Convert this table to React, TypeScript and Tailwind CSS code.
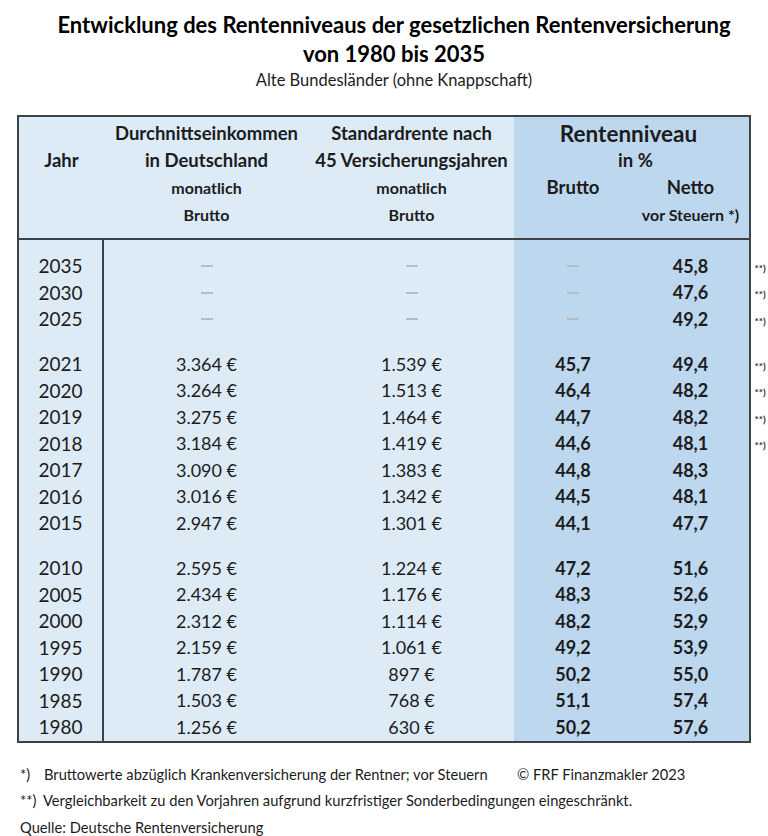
import React from "react";

type Row = {
  y: string;
  e: string;
  s: string;
  b: string;
  n: string;
  m: boolean;
};

const groups: Row[][] = [
  [
    { y: "2035", e: "", s: "", b: "", n: "45,8", m: true },
    { y: "2030", e: "", s: "", b: "", n: "47,6", m: true },
    { y: "2025", e: "", s: "", b: "", n: "49,2", m: true },
  ],
  [
    { y: "2021", e: "3.364 €", s: "1.539 €", b: "45,7", n: "49,4", m: true },
    { y: "2020", e: "3.264 €", s: "1.513 €", b: "46,4", n: "48,2", m: true },
    { y: "2019", e: "3.275 €", s: "1.464 €", b: "44,7", n: "48,2", m: true },
    { y: "2018", e: "3.184 €", s: "1.419 €", b: "44,6", n: "48,1", m: true },
    { y: "2017", e: "3.090 €", s: "1.383 €", b: "44,8", n: "48,3", m: false },
    { y: "2016", e: "3.016 €", s: "1.342 €", b: "44,5", n: "48,1", m: false },
    { y: "2015", e: "2.947 €", s: "1.301 €", b: "44,1", n: "47,7", m: false },
  ],
  [
    { y: "2010", e: "2.595 €", s: "1.224 €", b: "47,2", n: "51,6", m: false },
    { y: "2005", e: "2.434 €", s: "1.176 €", b: "48,3", n: "52,6", m: false },
    { y: "2000", e: "2.312 €", s: "1.114 €", b: "48,2", n: "52,9", m: false },
    { y: "1995", e: "2.159 €", s: "1.061 €", b: "49,2", n: "53,9", m: false },
    { y: "1990", e: "1.787 €", s: "897 €", b: "50,2", n: "55,0", m: false },
    { y: "1985", e: "1.503 €", s: "768 €", b: "51,1", n: "57,4", m: false },
    { y: "1980", e: "1.256 €", s: "630 €", b: "50,2", n: "57,6", m: false },
  ],
];

const Dash = () => (
  <span className="inline-block w-[12px] h-[2px] bg-[#b9bcc0] align-middle" />
);

function Column({
  className,
  render,
}: {
  className: string;
  render: (r: Row) => React.ReactNode;
}) {
  return (
    <div className={`flex flex-col pt-[13px] ${className}`}>
      {groups.map((g, gi) => (
        <div key={gi} className={gi > 0 ? "mt-[18.5px]" : ""}>
          {g.map((r) => (
            <div
              key={r.y}
              className="h-[26.5px] flex items-center justify-center"
            >
              {render(r)}
            </div>
          ))}
        </div>
      ))}
    </div>
  );
}

export default function App() {
  return (
    <div
      className="w-[768px] h-[836px] bg-white text-[#1c1c1c]"
      style={{ fontFamily: "Lato, 'Open Sans', sans-serif" }}
    >
      {/* Title */}
      <div className="pl-[20px] pt-[10px] text-center">
        <div className="text-[22px] font-bold leading-[29px] text-black whitespace-nowrap">
          Entwicklung des Rentenniveaus der gesetzlichen Rentenversicherung
        </div>
        <div className="text-[22px] font-bold leading-[29px] text-black">
          von 1980 bis 2035
        </div>
        <div className="mt-[1px] text-[16.5px] leading-[22px]">
          Alte Bundesländer (ohne Knappschaft)
        </div>
      </div>

      {/* Table + markers */}
      <div className="mt-[24px] ml-[17px] flex">
        <div className="w-[734px] border-2 border-[#3d4247]">
          {/* Header */}
          <div className="flex h-[123px] border-b-2 border-[#3d4247] font-bold">
            <div className="flex bg-[#ddebf7] pt-[3px]">
              <div className="w-[85px] flex flex-col items-center">
                <div className="h-[27px]" />
                <div className="h-[27px] flex items-center text-[18.5px]">
                  Jahr
                </div>
              </div>
              <div className="w-[205px] flex flex-col items-center">
                <div className="h-[27px] flex items-center text-[18.5px] whitespace-nowrap">
                  Durchnittseinkommen
                </div>
                <div className="h-[27px] flex items-center text-[18.5px]">
                  in Deutschland
                </div>
                <div className="h-[27px] flex items-center text-[16px]">
                  monatlich
                </div>
                <div className="h-[27px] flex items-center text-[16px]">
                  Brutto
                </div>
              </div>
              <div className="w-[205px] flex flex-col items-center">
                <div className="h-[27px] flex items-center text-[18.5px] whitespace-nowrap">
                  Standardrente nach
                </div>
                <div className="h-[27px] flex items-center text-[18.5px] whitespace-nowrap">
                  45 Versicherungsjahren
                </div>
                <div className="h-[27px] flex items-center text-[16px]">
                  monatlich
                </div>
                <div className="h-[27px] flex items-center text-[16px]">
                  Brutto
                </div>
              </div>
            </div>
            <div className="flex-1 bg-[#bdd7ee] pt-[3px] flex flex-col">
              <div className="h-[27px] flex items-center justify-center text-[22.5px] pr-[6px]">
                Rentenniveau
              </div>
              <div className="h-[27px] flex items-center justify-center text-[18.5px] pl-[8px]">
                in %
              </div>
              <div className="flex">
                <div className="w-[118px] h-[27px] flex items-center justify-center text-[18.5px]">
                  Brutto
                </div>
                <div className="flex-1 h-[27px] flex items-center justify-center text-[18.5px]">
                  Netto
                </div>
              </div>
              <div className="flex">
                <div className="w-[118px] h-[27px]" />
                <div className="flex-1 h-[27px] flex items-center justify-center text-[16px] whitespace-nowrap">
                  vor Steuern *)
                </div>
              </div>
            </div>
          </div>

          {/* Body */}
          <div className="flex text-[18px]">
            <Column
              className="w-[85px] bg-[#ddebf7] border-r-2 border-[#3d4247] text-[19px]"
              render={(r) => r.y}
            />
            <Column
              className="w-[205px] bg-[#ddebf7]"
              render={(r) => (r.e ? r.e : <Dash />)}
            />
            <Column
              className="w-[205px] bg-[#ddebf7]"
              render={(r) => (r.s ? r.s : <Dash />)}
            />
            <Column
              className="w-[118px] bg-[#bdd7ee] font-bold"
              render={(r) => (r.b ? r.b : <Dash />)}
            />
            <Column
              className="flex-1 bg-[#bdd7ee] font-bold"
              render={(r) => r.n}
            />
          </div>
        </div>

        {/* Markers outside the table */}
        <div className="w-[17px] pt-[125px]">
          <Column
            className="w-[17px]"
            render={(r) =>
              r.m ? (
                <span className="text-[10px] pt-[4px] pl-[1px] text-[#333] font-bold">
                  **)
                </span>
              ) : null
            }
          />
        </div>
      </div>

      {/* Footnotes */}
      <div className="mt-[18px] pl-[20px] text-[14.7px] leading-[26.5px]">
        <div className="flex">
          <span className="w-[24px]">*)</span>
          <span className="w-[473px] whitespace-nowrap">
            Bruttowerte abzüglich Krankenversicherung der Rentner; vor Steuern
          </span>
          <span>© FRF Finanzmakler 2023</span>
        </div>
        <div className="flex">
          <span className="w-[23px]">**)</span>
          <span className="whitespace-nowrap">
            Vergleichbarkeit zu den Vorjahren aufgrund kurzfristiger
            Sonderbedingungen eingeschränkt.
          </span>
        </div>
        <div>Quelle: Deutsche Rentenversicherung</div>
      </div>
    </div>
  );
}
